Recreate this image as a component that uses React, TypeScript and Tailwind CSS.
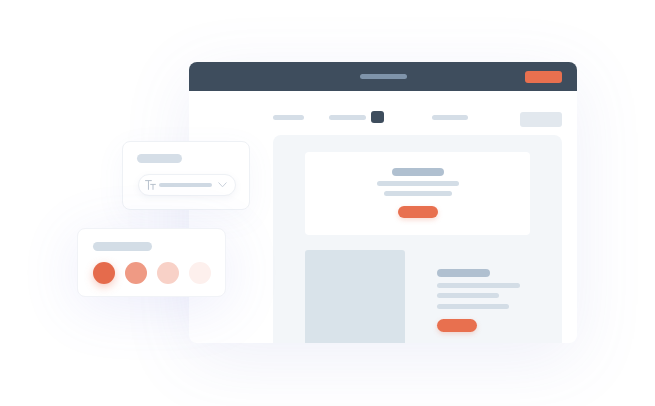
import React from 'react';

const Bar = ({ className }: { className: string }) => <div className={`rounded-full ${className}`} />;

const FontSizeIcon = () => (
  <svg width="11" height="10" viewBox="0 0 11 10" fill="none" stroke="#b7c1cc" strokeWidth="1" strokeLinecap="round">
    <path d="M0.5 0.6H6.4M3.45 0.6V9.4" />
    <path d="M5.6 4.4H10.4M8 4.4V9.4" />
  </svg>
);

const FontCard = () => (
  <div className="absolute left-[122px] top-[141px] w-[128px] h-[69px] rounded-lg border border-[#eef1f5] bg-white/95 shadow-[0_8px_30px_rgba(110,120,200,0.06)] pl-[14px] pt-[12px]">
    <Bar className="w-[45px] h-[9px] bg-[#d5dee7]" />
    <div className="mt-[11px] ml-px w-[98px] h-[22px] rounded-full border border-[#eef1f5] bg-white shadow-[0_2px_6px_rgba(120,130,170,0.08)] flex items-center pl-[6px] pr-[8px]">
      <FontSizeIcon />
      <Bar className="ml-[3px] w-[53px] h-[4px] bg-[#cfd9e3]" />
      <svg className="ml-auto" width="9" height="6" viewBox="0 0 9 6" fill="none" stroke="#c9d1db" strokeWidth="1" strokeLinecap="round" strokeLinejoin="round">
        <path d="M0.8 0.8L4.5 4.8L8.2 0.8" />
      </svg>
    </div>
  </div>
);

const ColorCard = () => {
  const swatches = ['bg-[#e56b4c]', 'bg-[#ef9a84]', 'bg-[#f8d1c7]', 'bg-[#fdf0ed]'];
  return (
    <div className="absolute left-[77px] top-[228px] w-[149px] h-[69px] rounded-lg border border-[#f1f3f7] bg-white shadow-[0_10px_60px_rgba(100,110,220,0.12)] pl-[15px] pt-[13px]">
      <Bar className="w-[59px] h-[9px] bg-[#d3dde6]" />
      <div className="mt-[11px] flex gap-[10px]">
        {swatches.map((c, i) => (
          <div
            key={c}
            className={`w-[22px] h-[22px] rounded-full ${c} ${i === 0 ? 'shadow-[0_3px_8px_rgba(229,107,76,0.35)]' : ''}`}
          />
        ))}
      </div>
    </div>
  );
};

export default function App() {
  return (
    <div className="relative w-[655px] h-[406px] overflow-hidden bg-white">
      <div className="ml-[189px] mt-[62px] w-[388px] h-[281px] rounded-lg overflow-hidden bg-white shadow-[0_16px_70px_rgba(100,110,200,0.1)]">
        {/* top bar */}
        <div className="h-[29px] bg-[#3e4d5d] grid grid-cols-[1fr_auto_1fr] items-center px-[15px]">
          <div />
          <Bar className="w-[47px] h-[5px] bg-[#7f94aa]" />
          <div className="flex justify-end">
            <div className="w-[37px] h-[12px] rounded-[3px] bg-[#e8704f]" />
          </div>
        </div>

        <div className="pl-[84px] pr-[15px]">
          {/* nav */}
          <div className="mt-[20px] h-[16px] flex items-start">
            <Bar className="mt-[4px] w-[31px] h-[5px] bg-[#d5dee7]" />
            <Bar className="mt-[4px] ml-[25px] w-[37px] h-[5px] bg-[#d5dee7]" />
            <div className="ml-[5px] w-[13px] h-[12px] rounded-[3px] bg-[#3e4d5d]" />
            <Bar className="mt-[4px] ml-[48px] w-[36px] h-[5px] bg-[#d5dee7]" />
            <div className="ml-auto mt-px w-[42px] h-[15px] rounded-[3px] bg-[#e2e8ee]" />
          </div>

          {/* page */}
          <div className="mt-[8px] h-[220px] rounded-t-lg bg-[#f3f6f9] pl-[32px] pt-[17px]">
            <div className="w-[225px] h-[83px] rounded-sm bg-white flex flex-col items-center pt-[16px]">
              <Bar className="w-[52px] h-[8px] bg-[#b0c0d0]" />
              <Bar className="mt-[5px] w-[82px] h-[5px] bg-[#d3dde6]" />
              <Bar className="mt-[5px] w-[68px] h-[5px] bg-[#d3dde6]" />
              <Bar className="mt-[10px] w-[40px] h-[12px] bg-[#e8704f] shadow-[0_2px_5px_rgba(232,112,79,0.25)]" />
            </div>

            <div className="mt-[15px] flex">
              <div className="w-[100px] h-[120px] rounded-[3px] bg-[#d9e3ea]" />
              <div className="ml-[32px] pt-[19px] flex flex-col">
                <Bar className="w-[53px] h-[8px] bg-[#b0c0d0]" />
                <Bar className="mt-[6px] w-[83px] h-[5px] bg-[#d3dde6]" />
                <Bar className="mt-[5px] w-[62px] h-[5px] bg-[#d3dde6]" />
                <Bar className="mt-[6px] w-[72px] h-[5px] bg-[#d3dde6]" />
                <Bar className="mt-[10px] w-[40px] h-[13px] bg-[#e8704f] shadow-[0_2px_5px_rgba(232,112,79,0.25)]" />
              </div>
            </div>
          </div>
        </div>
      </div>

      <FontCard />
      <ColorCard />
    </div>
  );
}
